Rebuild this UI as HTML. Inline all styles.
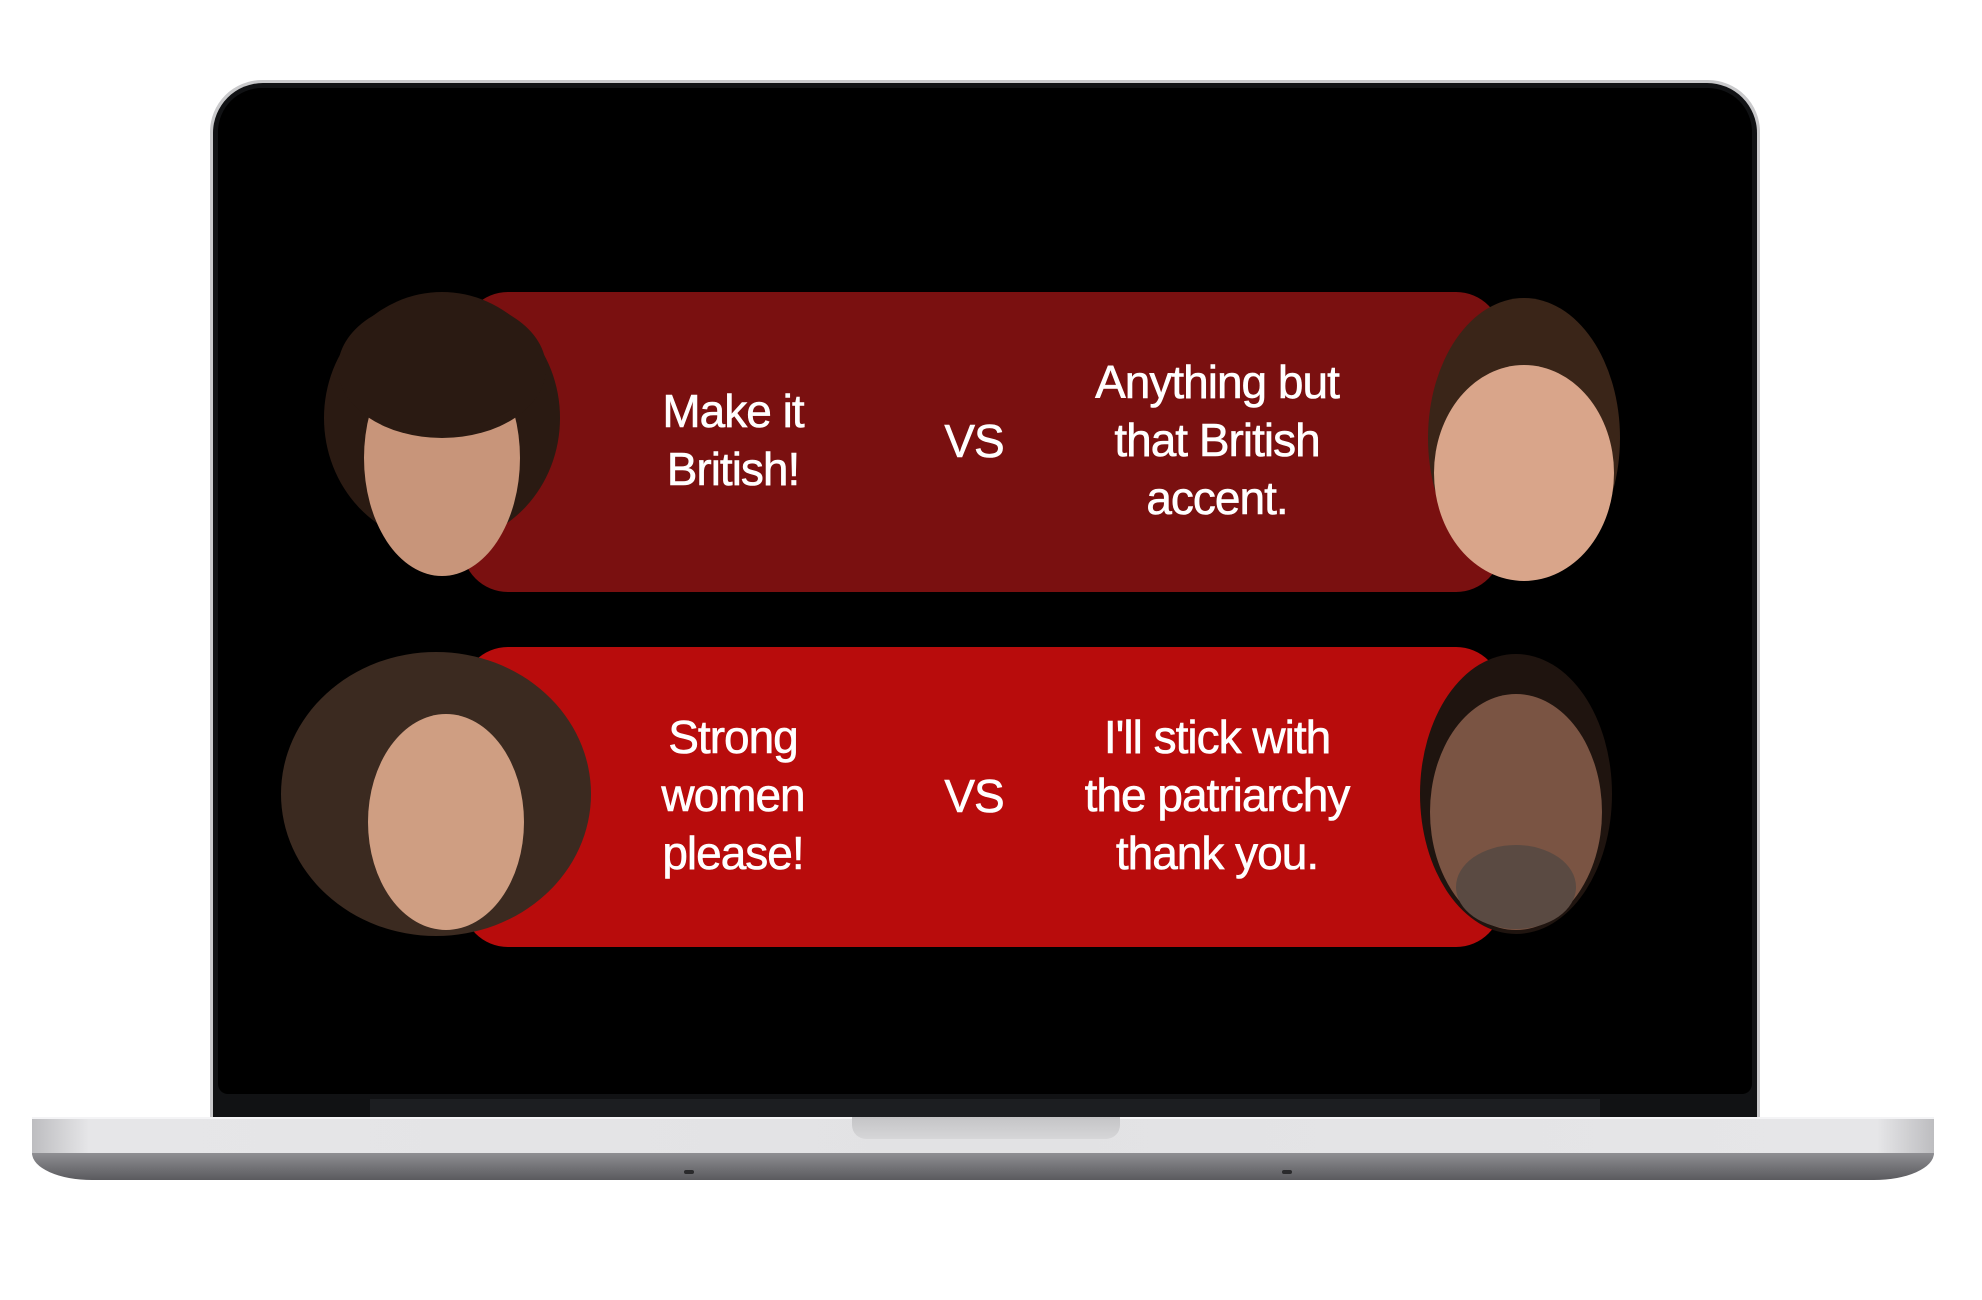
<!DOCTYPE html>
<html><head><style>
html,body{margin:0;padding:0;background:#fff;width:1982px;height:1300px;overflow:hidden;position:relative;font-family:"Liberation Sans",sans-serif}
.abs{position:absolute}
.lid{left:210px;top:80px;width:1550px;height:1046px;background:#c9c9cb;border-radius:52px 52px 0 0}
.lidin{left:213px;top:83px;width:1544px;height:1043px;background:#111214;border-radius:50px 50px 0 0}
.screen{left:218px;top:88px;width:1534px;height:1006px;background:#000;border-radius:44px 44px 10px 10px;overflow:hidden}
.hinge{left:370px;top:1099px;width:1230px;height:18px;background:#1c1e21}
.base{left:32px;top:1117px;width:1902px;height:36px;background:linear-gradient(90deg,#bdbdc0 0,#e6e6e8 3%,#e2e2e4 50%,#e6e6e8 97%,#bdbdc0 100%);border-top:2px solid #f4f4f6}
.base2{left:32px;top:1153px;width:1902px;height:27px;background:linear-gradient(#8f8f93,#5a5a5e);border-radius:0 0 60px 60px/0 0 27px 27px}
.notch{left:852px;top:1117px;width:268px;height:22px;background:linear-gradient(#c4c4c6,#d6d6d8);border-radius:0 0 14px 14px}
.pill{left:244px;width:1040px;height:300px;border-radius:46px}
.t{color:#fff;font-size:46px;line-height:58px;text-align:center;letter-spacing:-1px;position:absolute;-webkit-text-stroke:0.6px #fff}
</style></head><body>
<div class="abs lid"></div><div class="abs lidin"></div>
<div class="abs screen">
 <div class="abs pill" style="top:204px;background:#7a1010"></div>
 <div class="abs pill" style="top:559px;background:#b80c0c"></div>
 <div class="t" style="left:415px;width:200px;top:294px">Make it<br>British!</div>
 <div class="t" style="left:696px;width:120px;top:324px">VS</div>
 <div class="t" style="left:849px;width:300px;top:265px">Anything but<br>that British<br>accent.</div>
 <div class="t" style="left:415px;width:200px;top:620px">Strong<br>women<br>please!</div>
 <div class="t" style="left:696px;width:120px;top:679px">VS</div>
 <div class="t" style="left:829px;width:340px;top:620px">I'll stick with<br>the patriarchy<br>thank you.</div>
 <svg class="abs" style="left:0;top:0" width="1540" height="1010">
  <ellipse cx="224" cy="330" rx="118" ry="126" fill="#2a1a12"/>
  <ellipse cx="224" cy="370" rx="78" ry="118" fill="#c8957a"/>
  <ellipse cx="224" cy="280" rx="104" ry="70" fill="#2a1a12"/>
  <ellipse cx="1306" cy="350" rx="96" ry="140" fill="#3a2518"/>
  <ellipse cx="1306" cy="385" rx="90" ry="108" fill="#d9a58a"/>
  <ellipse cx="218" cy="706" rx="155" ry="142" fill="#3b2a20"/>
  <ellipse cx="228" cy="734" rx="78" ry="108" fill="#cf9e82"/>
  <ellipse cx="1298" cy="706" rx="96" ry="140" fill="#1f140f"/>
  <ellipse cx="1298" cy="724" rx="86" ry="118" fill="#7a5443"/>
  <ellipse cx="1298" cy="799" rx="60" ry="42" fill="#5a4a42"/>
 </svg>
</div>
<div class="abs hinge"></div>
<div class="abs base"></div><div class="abs base2"></div><div class="abs notch"></div>
<div class="abs" style="left:684px;top:1170px;width:10px;height:4px;background:#2a2a2c;border-radius:2px"></div>
<div class="abs" style="left:1282px;top:1170px;width:10px;height:4px;background:#2a2a2c;border-radius:2px"></div>
</body></html>
